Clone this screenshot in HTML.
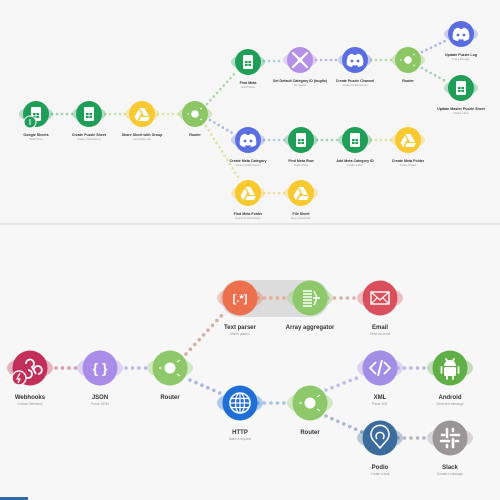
<!DOCTYPE html>
<html><head><meta charset="utf-8"><style>
html,body{margin:0;padding:0;background:#f6f6f6;width:500px;height:500px;overflow:hidden;font-family:"Liberation Sans",sans-serif}
svg{display:block}
.t{font-weight:bold;fill:#333;text-anchor:middle}
.s{fill:#999;text-anchor:middle}
</style></head><body>
<svg width="500" height="500" viewBox="0 0 500 500" xmlns="http://www.w3.org/2000/svg">
<defs>
<g id="sheet"><rect x="-5" y="-7" width="10" height="14" rx="1.2" fill="#fff"/><rect x="-3" y="-1" width="6" height="5" fill="#1e9e57"/><path d="M0 -1V4M-3 1.5H3" stroke="#fff" stroke-width="0.8"/></g>
<g id="drive"><path d="M-2.5 -6H2.5L7 2H2ZM-3.2 -4.6L-7.5 2.8L-5 7L-0.7 -0.4ZM-3 7H6L8 3H-1Z" fill="#fff"/></g>
<g id="router"><circle r="3.8" fill="#fff"/><path d="M-8 0h2M5 -5l2 -1M5 5l2 1" stroke="#fff" stroke-width="0.8"/></g>
<g id="discord"><path d="M-7 -4Q-4 -7 -2 -6L-1 -5H1L2 -6Q4 -7 7 -4Q9 1 8 5Q5 7 3 7L2 5Q-0 6 -2 5L-3 7Q-5 7 -8 5Q-9 1 -7 -4Z" fill="#fff"/><circle cx="-3" cy="1" r="1.4" fill="#5b6ee1"/><circle cx="3" cy="1" r="1.4" fill="#5b6ee1"/></g>
<g id="tools"><path d="M-7 -7L7 7M7 -7L-7 7" stroke="#fff" stroke-width="2.2" stroke-linecap="round"/><circle r="2.5" fill="#fff"/></g>
</defs>
<rect width="500" height="224" fill="#f6f6f6"/>
<rect y="223" width="500" height="2" fill="#e6e6e6"/>
<rect y="225" width="500" height="275" fill="#f7f7f7"/>

<g fill="none" stroke-width="2.6" stroke-linecap="round" stroke-dasharray="0 5">
<path d="M52 114H73" stroke="#9fd3b3"/>
<path d="M105 114H126" stroke="#c8e3a0"/>
<path d="M158 114H179" stroke="#d7e7a0"/>
<path d="M207 104L236 72" stroke="#a9d8a0"/>
<path d="M210 120L234 134" stroke="#aab6e6"/>
<path d="M206 126L240 180" stroke="#e3e29a"/>
<path d="M264 61H284" stroke="#a9cfe0"/>
<path d="M316 60H339" stroke="#b3b6ec"/>
<path d="M371 60H392" stroke="#b9dca2"/>
<path d="M422 52L447 40" stroke="#aab6e6"/>
<path d="M422 68L447 82" stroke="#9fd3b3"/>
<path d="M264 140H285" stroke="#a9cfe0"/>
<path d="M317 140H339" stroke="#9fd3b3"/>
<path d="M371 140H392" stroke="#d7e7a0"/>
<path d="M264 193H285" stroke="#f2dc98"/>
</g>

<g>
<g transform="translate(36,114)"><ellipse rx="17" ry="8" fill="#1e9e57" opacity=".3"/><circle r="13" fill="#1e9e57"/><use href="#sheet"/><circle cx="-6" cy="8" r="6" fill="#1e9e57" stroke="#fff" stroke-width="1"/><path d="M-6 5V11" stroke="#fff" stroke-width="1"/></g>
<g transform="translate(89,114)"><ellipse rx="17" ry="8" fill="#1e9e57" opacity=".3"/><circle r="13" fill="#1e9e57"/><use href="#sheet"/></g>
<g transform="translate(142,114)"><ellipse rx="17" ry="8" fill="#f9c932" opacity=".35"/><circle r="13" fill="#f9c932"/><use href="#drive"/></g>
<g transform="translate(195,114)"><ellipse rx="17" ry="8" fill="#8cc665" opacity=".35"/><circle r="13" fill="#8cc665"/><use href="#router"/></g>
<g transform="translate(248,62)"><ellipse rx="17" ry="8" fill="#1e9e57" opacity=".3"/><circle r="13" fill="#1e9e57"/><use href="#sheet"/></g>
<g transform="translate(300,60)"><ellipse rx="17" ry="8" fill="#b490e8" opacity=".35"/><circle r="13" fill="#b490e8"/><use href="#tools"/></g>
<g transform="translate(355,60)"><ellipse rx="17" ry="8" fill="#5b6ee1" opacity=".3"/><circle r="13" fill="#5b6ee1"/><use href="#discord"/></g>
<g transform="translate(408,60)"><ellipse rx="17" ry="8" fill="#8cc665" opacity=".35"/><circle r="13" fill="#8cc665"/><use href="#router"/></g>
<g transform="translate(461,34)"><ellipse rx="17" ry="8" fill="#5b6ee1" opacity=".3"/><circle r="13" fill="#5b6ee1"/><use href="#discord"/></g>
<g transform="translate(461,88)"><ellipse rx="17" ry="8" fill="#1e9e57" opacity=".3"/><circle r="13" fill="#1e9e57"/><use href="#sheet"/></g>
<g transform="translate(248,140)"><ellipse rx="17" ry="8" fill="#5b6ee1" opacity=".3"/><circle r="13" fill="#5b6ee1"/><use href="#discord"/></g>
<g transform="translate(301,140)"><ellipse rx="17" ry="8" fill="#1e9e57" opacity=".3"/><circle r="13" fill="#1e9e57"/><use href="#sheet"/></g>
<g transform="translate(355,140)"><ellipse rx="17" ry="8" fill="#1e9e57" opacity=".3"/><circle r="13" fill="#1e9e57"/><use href="#sheet"/></g>
<g transform="translate(408,140)"><ellipse rx="17" ry="8" fill="#f9c932" opacity=".35"/><circle r="13" fill="#f9c932"/><use href="#drive"/></g>
<g transform="translate(248,193)"><ellipse rx="17" ry="8" fill="#f9c932" opacity=".35"/><circle r="13" fill="#f9c932"/><use href="#drive"/></g>
<g transform="translate(301,193)"><ellipse rx="17" ry="8" fill="#f9c932" opacity=".35"/><circle r="13" fill="#f9c932"/><use href="#drive"/></g>
</g>

<g font-size="3.6">
<text class="t" x="36" y="136">Google Sheets</text><text class="s" x="36" y="140" font-size="2.4">Watch Rows</text>
<text class="t" x="89" y="136">Create Puzzle Sheet</text><text class="s" x="89" y="140" font-size="2.4">Create a Spreadsheet</text>
<text class="t" x="142" y="136">Share Sheet with Group</text><text class="s" x="142" y="140" font-size="2.4">Get a Share Link</text>
<text class="t" x="195" y="136">Router</text>
<text class="t" x="248" y="84">Find Meta</text><text class="s" x="248" y="88" font-size="2.4">Search Rows</text>
<text class="t" x="300" y="82">Set Default Category ID (bugfix)</text><text class="s" x="300" y="86" font-size="2.4">Set variable</text>
<text class="t" x="355" y="82">Create Puzzle Channel</text><text class="s" x="355" y="86" font-size="2.4">Create a Guild Channel</text>
<text class="t" x="408" y="82">Router</text>
<text class="t" x="461" y="56">Update Puzzle Log</text><text class="s" x="461" y="60" font-size="2.4">Post a Message</text>
<text class="t" x="461" y="110">Update Master Puzzle Sheet</text><text class="s" x="461" y="114" font-size="2.4">Update a Row</text>
<text class="t" x="248" y="162">Create Meta Category</text><text class="s" x="248" y="166" font-size="2.4">Create a Guild Channel</text>
<text class="t" x="301" y="162">Find Meta Row</text><text class="s" x="301" y="166" font-size="2.4">Search Rows</text>
<text class="t" x="355" y="162">Add Meta Category ID</text><text class="s" x="355" y="166" font-size="2.4">Update a Row</text>
<text class="t" x="408" y="162">Create Meta Folder</text><text class="s" x="408" y="166" font-size="2.4">Create a Folder</text>
<text class="t" x="248" y="215">Find Meta Folder</text><text class="s" x="248" y="219" font-size="2.4">Search for Files/Folders</text>
<text class="t" x="301" y="215">File Sheet</text><text class="s" x="301" y="219" font-size="2.4">Move a File/Folder</text>
</g>

<rect x="221" y="280" width="108" height="37" rx="18.5" fill="#dcdcdc"/>

<g fill="none" stroke-width="3.6" stroke-linecap="round" stroke-dasharray="0 6.5">
<path d="M56 368H78" stroke="#d79aa6"/>
<path d="M126 368H148" stroke="#b8b4ec"/>
<path d="M186 354L222 315" stroke="#d2b0a0"/>
<path d="M190 380L222 394" stroke="#a9b8e0"/>
<path d="M258 298H288" stroke="#e6a99a"/>
<path d="M328 298H360" stroke="#d9b3a6"/>
<path d="M258 403H290" stroke="#a9c2e6"/>
<path d="M326 390L362 376" stroke="#c4bcea"/>
<path d="M326 416L362 432" stroke="#aab9cf"/>
<path d="M398 368H430" stroke="#bcb3e2"/>
<path d="M398 438H430" stroke="#b4b5c0"/>
</g>

<g>
<g transform="translate(30,368)"><ellipse rx="23" ry="11" fill="#c2305a" opacity=".35"/><circle r="17.5" fill="#c2305a"/><path d="M-4 -4a4 4 0 1 1 6 3l4 7M-6 6a4 4 0 1 0 4 -4M8 6a4 4 0 1 0 -4 -5" stroke="#fff" stroke-width="1.8" fill="none"/><circle cx="-11" cy="10" r="7" fill="#c2305a" stroke="#fff" stroke-width="1.3"/><path d="M-10 5L-13 11H-10L-12 15" stroke="#fff" stroke-width="1.2" fill="none"/></g>
<g transform="translate(100,368)"><ellipse rx="23" ry="11" fill="#a98de8" opacity=".35"/><circle r="17.5" fill="#a98de8"/><text x="0" y="5" font-size="14" font-weight="bold" fill="#fff" text-anchor="middle">{ }</text></g>
<g transform="translate(170,368)"><ellipse rx="23" ry="11" fill="#8dc96a" opacity=".35"/><circle r="17.5" fill="#8dc96a"/><circle r="5.5" fill="#fff"/><path d="M-11 0h3M7 -6l3 -2M7 6l3 2" stroke="#fff" stroke-width="1"/></g>
<g transform="translate(240,298)"><ellipse rx="23" ry="11" fill="#ec6f4e" opacity=".35"/><circle r="17.5" fill="#ec6f4e"/><text x="0" y="4" font-size="11" font-weight="bold" fill="#fff" text-anchor="middle">[.*]</text></g>
<g transform="translate(310,298)"><ellipse rx="23" ry="11" fill="#8dc96a" opacity=".35"/><circle r="17.5" fill="#8dc96a"/><path d="M-7 -7h9M-7 -4h9M-7 -1h9M-7 2h9M-7 5h9M-7 8h9M4 -7l3 7l-3 7M3 0h7" stroke="#fff" stroke-width="1.4" fill="none"/></g>
<g transform="translate(380,298)"><ellipse rx="23" ry="11" fill="#d9505c" opacity=".35"/><circle r="17.5" fill="#d9505c"/><rect x="-9" y="-6" width="18" height="12" fill="none" stroke="#fff" stroke-width="1.4"/><path d="M-9 -6L0 2L9 -6M-9 6L-3 0M9 6L3 0" stroke="#fff" stroke-width="1.2" fill="none"/></g>
<g transform="translate(240,403)"><ellipse rx="23" ry="11" fill="#1f6fd6" opacity=".35"/><circle r="17.5" fill="#1f6fd6"/><circle r="10" fill="none" stroke="#fff" stroke-width="1.5"/><ellipse rx="4.5" ry="10" fill="none" stroke="#fff" stroke-width="1.2"/><path d="M-10 0h20M-9 -4.5h18M-9 4.5h18M0 -10v20" stroke="#fff" stroke-width="1.2"/></g>
<g transform="translate(310,403)"><ellipse rx="23" ry="11" fill="#8dc96a" opacity=".35"/><circle r="17.5" fill="#8dc96a"/><circle r="5.5" fill="#fff"/><path d="M-11 0h3M7 -6l3 -2M7 6l3 2" stroke="#fff" stroke-width="1"/></g>
<g transform="translate(380,368)"><ellipse rx="23" ry="11" fill="#a38ee6" opacity=".35"/><circle r="17.5" fill="#a38ee6"/><path d="M-4 -6L-10 0L-4 6M4 -6L10 0L4 6M2 -8L-2 8" stroke="#fff" stroke-width="1.8" fill="none"/></g>
<g transform="translate(450,368)"><ellipse rx="23" ry="11" fill="#5fae46" opacity=".35"/><circle r="17.5" fill="#5fae46"/><path d="M-6 -2a6 6 0 0 1 12 0Z" fill="#fff"/><rect x="-6" y="-1" width="12" height="9" rx="1.5" fill="#fff"/><path d="M-8.5 -1v6M8.5 -1v6M-3 8v3M3 8v3M-4 -9l2 3M4 -9l-2 3" stroke="#fff" stroke-width="1.8" stroke-linecap="round"/></g>
<g transform="translate(380,438)"><ellipse rx="23" ry="11" fill="#3c6c9e" opacity=".35"/><circle r="17.5" fill="#3c6c9e"/><path d="M0 10L-7 2a9 9 0 1 1 14 0Z" fill="none" stroke="#fff" stroke-width="1.5"/><path d="M-3 1a4 4 0 1 1 6 0" fill="none" stroke="#fff" stroke-width="1.5"/></g>
<g transform="translate(450,438)"><ellipse rx="23" ry="11" fill="#9a9597" opacity=".35"/><circle r="17.5" fill="#9a9597"/><path d="M-3 -9v8M3 1v8M-9 3h8M1 -3h8M-8 -3h2M6 3h2M-3 9v-2M3 -9v2" stroke="#fff" stroke-width="2.6" stroke-linecap="round"/></g>
</g>

<g>
<text class="t" x="30" y="399" font-size="6">Webhooks</text><text class="s" x="30" y="405" font-size="3.2">Custom Webhook</text>
<text class="t" x="100" y="399" font-size="6">JSON</text><text class="s" x="100" y="405" font-size="3.2">Parse JSON</text>
<text class="t" x="170" y="399" font-size="6">Router</text>
<text class="t" x="240" y="329" font-size="6">Text parser</text><text class="s" x="240" y="335" font-size="3.2">Match pattern</text>
<text class="t" x="310" y="329" font-size="6">Array aggregator</text>
<text class="t" x="380" y="329" font-size="6">Email</text><text class="s" x="380" y="335" font-size="3.2">Send an email</text>
<text class="t" x="240" y="434" font-size="6">HTTP</text><text class="s" x="240" y="440" font-size="3.2">Make a request</text>
<text class="t" x="310" y="434" font-size="6">Router</text>
<text class="t" x="380" y="399" font-size="6">XML</text><text class="s" x="380" y="405" font-size="3.2">Parse XML</text>
<text class="t" x="450" y="399" font-size="6">Android</text><text class="s" x="450" y="405" font-size="3.2">Send text message</text>
<text class="t" x="380" y="469" font-size="6">Podio</text><text class="s" x="380" y="475" font-size="3.2">Create a task</text>
<text class="t" x="450" y="469" font-size="6">Slack</text><text class="s" x="450" y="475" font-size="3.2">Create a message</text>
</g>
<rect x="0" y="497" width="28" height="3" fill="#2f6aa3"/>
</svg>
</body></html>
